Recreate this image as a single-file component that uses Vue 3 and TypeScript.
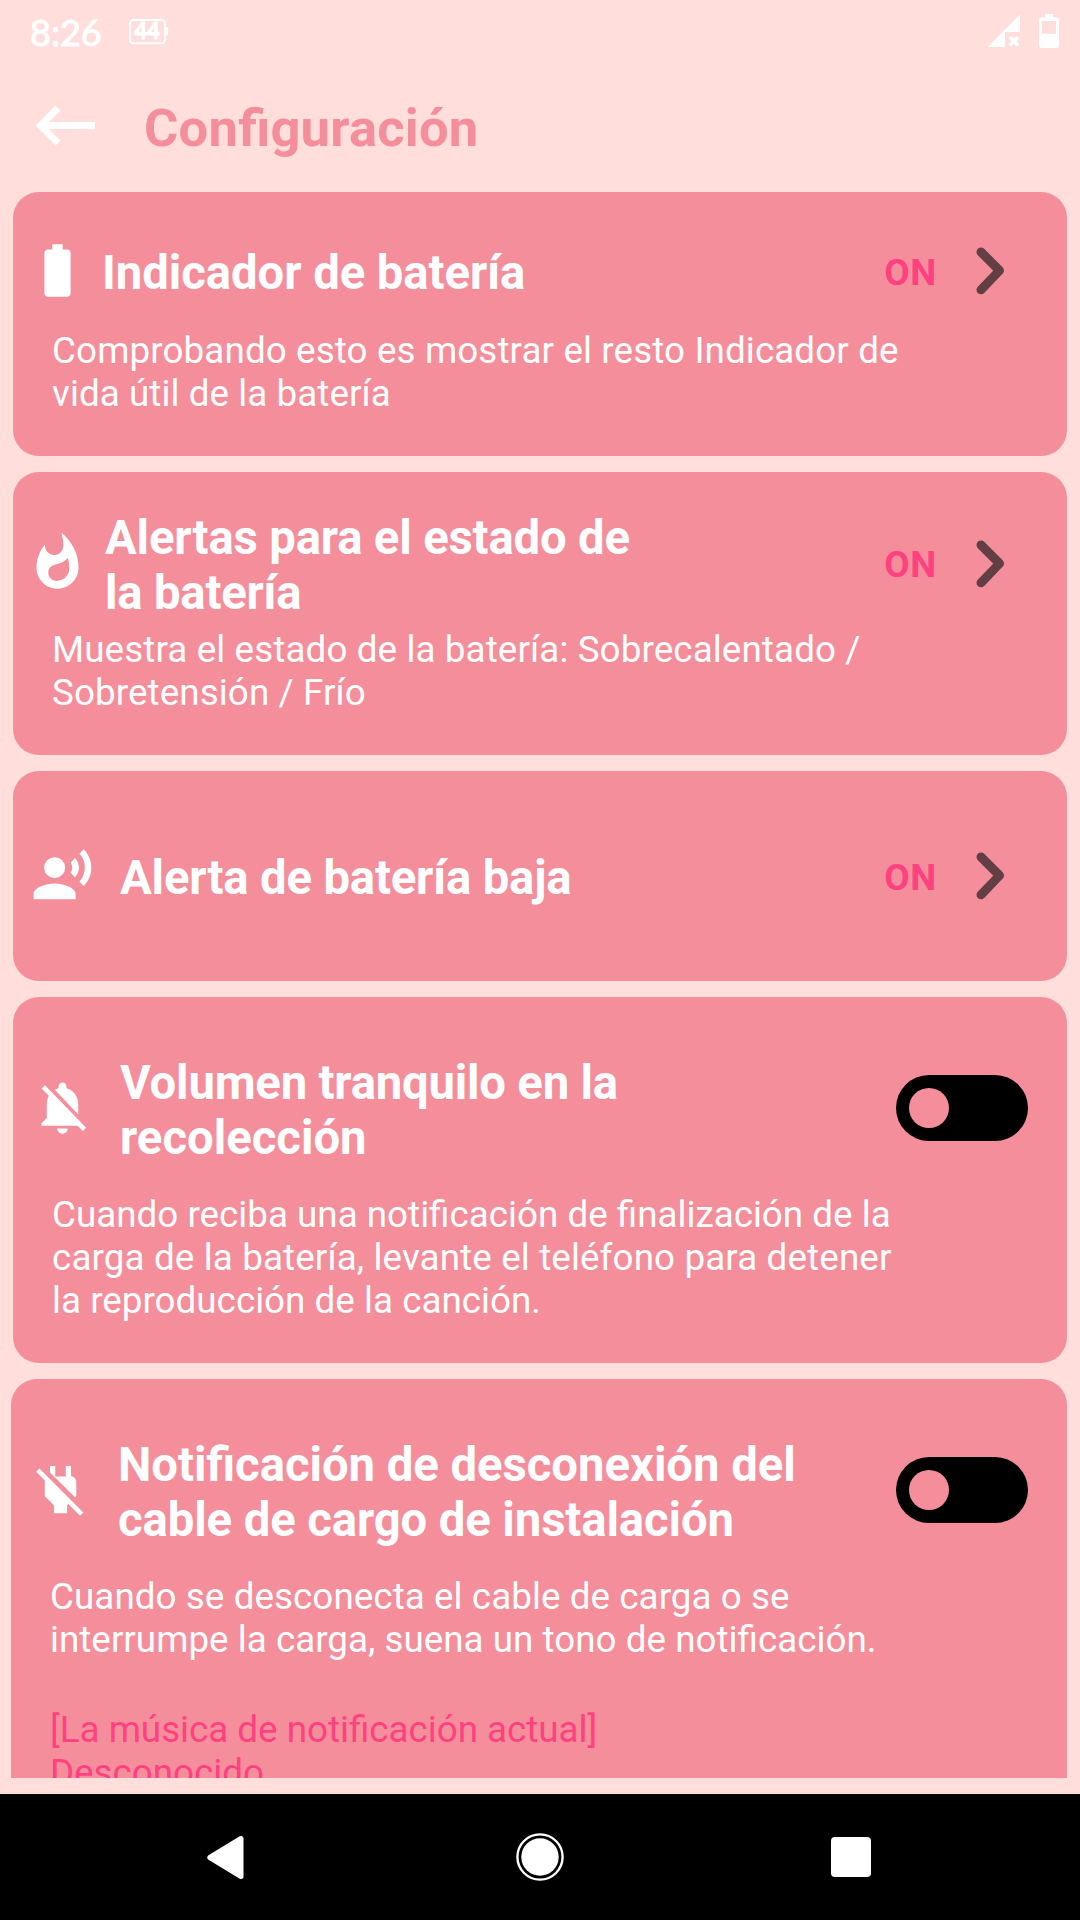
<script setup lang="ts">
type IconName = 'battery' | 'fire' | 'voice' | 'bellOff' | 'plugOff'

/** A line of text and its tracking in pixels. */
type Line = [text: string, tracking: number]

interface Setting {
  id: string
  icon: IconName
  title: Line[]
  description?: Line[]
  control: 'link' | 'switch'
  extra?: Line[]
}

const icons: Record<IconName, string> = {
  battery:
    'M15.67 4H14V2h-4v2H8.33C7.6 4 7 4.6 7 5.33v15.33C7 21.4 7.6 22 8.33 22h7.33c.74 0 1.34-.6 1.34-1.33V5.33C17 4.6 16.4 4 15.67 4z',
  fire:
    'M13.5.67s.74 2.65.74 4.8c0 2.06-1.35 3.73-3.41 3.73-2.07 0-3.63-1.67-3.63-3.73l.03-.36C5.21 7.51 4 10.62 4 14c0 4.42 3.58 8 8 8s8-3.58 8-8C20 8.61 17.41 3.8 13.5.67zM11.71 19c-1.78 0-3.22-1.4-3.22-3.14 0-1.62 1.05-2.76 2.81-3.12 1.77-.36 3.6-1.21 4.62-2.58.39 1.29.59 2.65.59 4.04 0 2.65-2.15 4.8-4.8 4.8z',
  voice:
    'M9 5a4 4 0 1 0 0 8a4 4 0 1 0 0-8zM9 15c-2.67 0-8 1.34-8 4v2h16v-2c0-2.66-5.33-4-8-4zM16.76 5.36l-1.68 1.69c.84 1.18.84 2.71 0 3.89l1.68 1.69c2.02-2.02 2.02-5.07 0-7.27zM20.07 2l-1.63 1.63c2.77 3.02 2.77 7.56 0 10.74L20.07 16c3.9-3.89 3.91-9.95 0-14z',
  bellOff:
    'M20 18.69L7.84 6.14 5.27 3.49 4 4.76l2.8 2.8v.01c-.52.99-.8 2.16-.8 3.42v5l-2 2v1h13.73l2 2L21 19.72l-1-1.03zM12 22c1.11 0 2-.89 2-2h-4c0 1.11.89 2 2 2zm6-7.32V11c0-3.08-1.64-5.64-4.5-6.32V4c0-.83-.67-1.5-1.5-1.5s-1.5.67-1.5 1.5v.68c-.15.03-.29.08-.42.12-.1.03-.2.07-.3.11h-.01c-.01 0-.01 0-.02.01-.23.09-.46.2-.68.31 0 0-.01 0-.01.01L18 14.68z',
  plugOff:
    'M18 14.49V9c0-1-1.01-2.01-2-2V3h-2v4h-4V3H8v2.48l9.51 9.5.49-.49zm-1.76 1.77L7.2 7.2l-.01.01L3.98 4 2.71 5.25l3.36 3.36C6.04 8.74 6 8.87 6 9v5.48L9.5 18v3h5v-3l.48-.48L19.45 22l1.26-1.28-4.47-4.46z',
}

const settings: Setting[] = [
  {
    id: 'indicator',
    icon: 'battery',
    title: [['Indicador de batería', -0.05]],
    description: [
      ['Comprobando esto es mostrar el resto Indicador de', 0.13],
      ['vida útil de la batería', 0.08],
    ],
    control: 'link',
  },
  {
    id: 'health',
    icon: 'fire',
    title: [
      ['Alertas para el estado de', -0.16],
      ['la batería', -0.2],
    ],
    description: [
      ['Muestra el estado de la batería: Sobrecalentado /', 0.125],
      ['Sobretensión / Frío', 0.11],
    ],
    control: 'link',
  },
  { id: 'low', icon: 'voice', title: [['Alerta de batería baja', -0.17]], control: 'link' },
  {
    id: 'quiet',
    icon: 'bellOff',
    title: [
      ['Volumen tranquilo en la', -0.2],
      ['recolección', 0],
    ],
    description: [
      ['Cuando reciba una notificación de finalización de la', 0.02],
      ['carga de la batería, levante el teléfono para detener', 0.14],
      ['la reproducción de la canción.', 0.03],
    ],
    control: 'switch',
  },
  {
    id: 'unplug',
    icon: 'plugOff',
    title: [
      ['Notificación de desconexión del', -0.04],
      ['cable de cargo de instalación', -0.1],
    ],
    description: [
      ['Cuando se desconecta el cable de carga o se', 0.08],
      ['interrumpe la carga, suena un tono de notificación.', 0.035],
    ],
    control: 'switch',
    extra: [
      ['[La música de notificación actual]', 0],
      ['Desconocido', 0],
    ],
  },
]

const tracked = (px: number) => ({ letterSpacing: px ? `${px}px` : 'normal' })
</script>

<template>
  <div class="screen">
    <div class="status">
      <span class="clock">8:26</span>
      <svg class="level" width="40" height="26" viewBox="0 0 40 26">
        <rect x="1" y="1" width="35" height="23.2" rx="3.5" fill="none" stroke="#fff" stroke-width="2" />
        <rect x="36" y="8" width="3.2" height="8.6" rx="1" fill="#fff" />
        <text x="18" y="20.300" text-anchor="middle">44</text>
      </svg>
      <svg class="signal" width="34" height="34" viewBox="0 0 34 34">
        <path d="M0.5 33L33 0.5V18H18V33z" fill="#fff" />
        <path d="M22.8 23L31 31.4M31 23l-8.2 8.4" stroke="#fff" stroke-width="3.6" />
      </svg>
      <svg class="cell" width="20" height="34" viewBox="0 0 20 34">
        <path
          d="M6 0h8v3.5h4a2 2 0 0 1 2 2V32a2 2 0 0 1-2 2H2a2 2 0 0 1-2-2V5.500a2 2 0 0 1 2-2h4zM3 7v12.700h14V7z"
          fill="#fff"
          fill-rule="evenodd"
        />
      </svg>
    </div>

    <header class="bar">
      <svg class="back" width="60" height="42" viewBox="0 0 60 42">
        <path d="M6 20.500H59" stroke="#fff" stroke-width="7" />
        <path d="M22 3L4.600 20.500L22 38" fill="none" stroke="#fff" stroke-width="6.800" />
      </svg>
      <h1>Configuración</h1>
    </header>

    <main class="list">
      <section v-for="s in settings" :key="s.id" class="card" :class="s.id">
        <div class="row">
          <svg class="icon" width="63" height="63" viewBox="0 0 24 24">
            <path :d="icons[s.icon]" fill="#fff" fill-rule="nonzero" />
          </svg>
          <h2>
            <span v-for="[text, px] in s.title" :key="text" :style="tracked(px)">{{ text }}</span>
          </h2>
          <template v-if="s.control === 'link'">
            <span class="on">ON</span>
            <svg class="chevron" width="28" height="48" viewBox="0 0 28 48">
              <path
                d="M5 5L23.500 23.500L5 42.800"
                fill="none"
                stroke="#623f44"
                stroke-width="9"
                stroke-linecap="round"
                stroke-linejoin="round"
              />
            </svg>
          </template>
          <span v-else class="switch"><i></i></span>
        </div>
        <p v-if="s.description">
          <span v-for="[text, px] in s.description" :key="text" :style="tracked(px)">{{ text }}</span>
        </p>
        <p v-if="s.extra" class="extra">
          <span v-for="[text, px] in s.extra" :key="text" :style="tracked(px)">{{ text }}</span>
        </p>
      </section>
    </main>

    <nav class="nav">
      <svg width="42" height="43" viewBox="0 0 42 43">
        <path d="M34 2.500V40.500L2.800 21.500z" fill="#fff" stroke="#fff" stroke-width="5" stroke-linejoin="round" />
      </svg>
      <svg width="48" height="48" viewBox="0 0 48 48">
        <circle cx="24" cy="24" r="22.600" fill="none" stroke="#fff" stroke-width="2.400" />
        <circle cx="24" cy="24" r="18.700" fill="#fff" />
      </svg>
      <span class="recent"></span>
    </nav>
  </div>
</template>

<style>
body {
  background: #ffdedc;
}
</style>

<style scoped>
.screen {
  width: 1080px;
  height: 1920px;
  display: flex;
  flex-direction: column;
  overflow: hidden;
  background: #ffdedc;
  color: #fff;
  font-family: Roboto, 'Liberation Sans', sans-serif;
  font-feature-settings: 'liga' 1;
}
.status {
  height: 63px;
  display: flex;
  align-items: flex-start;
  padding: 0 21px 0 30px;
  flex: none;
  box-sizing: border-box;
}
.clock {
  width: 99px;
  margin-top: 11px;
  font: 400 36px/42px Lato, sans-serif;
  letter-spacing: 0;
  -webkit-text-stroke: 1px #fff;
}
.level {
  margin-top: 19px;
}
.level text {
  font: 700 22px Lato, sans-serif;
  fill: #fff;
  stroke: #fff;
  stroke-width: 1px;
}
.signal {
  margin: 14px 18px 0 auto;
}
.cell {
  margin-top: 14px;
}
.bar {
  height: 129px;
  flex: none;
  display: flex;
  padding-left: 36px;
  box-sizing: border-box;
}
.back {
  margin-top: 42px;
}
h1 {
  margin: 34px 0 0 48px;
  font-size: 52.5px;
  line-height: 62px;
  font-weight: 700;
  letter-spacing: 0.24px;
  color: #f58e9b;
}
.list {
  height: 1586px;
  flex: none;
  overflow: hidden;
  display: flex;
  flex-direction: column;
  gap: 16px;
  padding: 0 13px;
  box-sizing: border-box;
}
.card {
  flex: none;
  box-sizing: border-box;
  padding: 58px 0 41px 13px;
  border-radius: 26px;
  background: #f58e9b;
}
.row {
  height: 110px;
  margin-bottom: 28px;
  display: flex;
  align-items: center;
}
.icon {
  flex: none;
  margin: 0 13px 5px 0;
}
h2 {
  flex: 1;
  margin: 2px 0 0;
  font-size: 47.25px;
  line-height: 55px;
  font-weight: 700;
  white-space: nowrap;
}
h2 span,
p span {
  display: block;
}
p {
  margin: 0 0 0 26px;
  font-size: 36.75px;
  line-height: 43px;
  white-space: nowrap;
}
.on {
  margin: 0 39px 1px 0;
  font-size: 36.75px;
  line-height: 43px;
  font-weight: 700;
  letter-spacing: 0.7px;
  color: #ff4081;
}
.chevron {
  flex: none;
  margin: 0 63px 3px 0;
}
.switch {
  width: 132px;
  height: 66px;
  margin: 0 39px 4px 0;
  padding: 13px;
  box-sizing: border-box;
  border-radius: 33px;
  background: #000;
}
.switch i {
  display: block;
  width: 40px;
  height: 40px;
  border-radius: 50%;
  background: #f58e9b;
}
.indicator {
  padding-top: 48px;
}
.indicator .row {
  height: 65px;
  margin-bottom: 24px;
}
.health {
  padding-top: 38px;
}
.health .row {
  margin-bottom: 8px;
}
.health .icon {
  margin-right: 16px;
}
.low {
  padding: 74px 0 71px 18px;
}
.low .row {
  height: 65px;
  margin: 0;
}
.low .icon,
.quiet .icon,
.unplug .icon {
  margin-right: 26px;
}
.quiet {
  padding-left: 18px;
}
.quiet p {
  margin-left: 21px;
}
.unplug {
  margin-left: -2px;
  padding-left: 18px;
}
.unplug p {
  margin-left: 21px;
}
.unplug p.extra {
  margin-top: 47px;
  color: #ff4081;
}
.nav {
  height: 126px;
  margin-top: 16px;
  flex: none;
  display: flex;
  align-items: center;
  justify-content: space-between;
  padding: 0 209px 0 207px;
  box-sizing: border-box;
  background: #000;
}
.recent {
  width: 40px;
  height: 40px;
  border-radius: 4px;
  background: #fff;
}
</style>
